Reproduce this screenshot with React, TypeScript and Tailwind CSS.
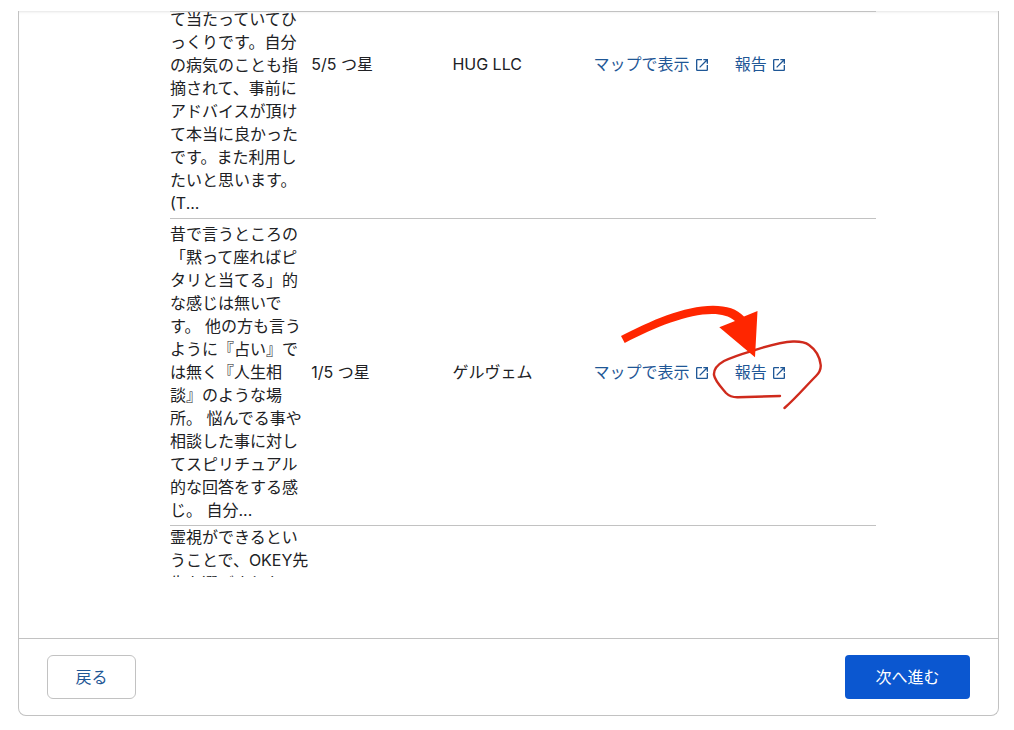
import React from "react";

type Review = {
  lines: string[];
  rating: string;
  author: string;
  scrolled?: boolean;
  marked?: boolean;
};

const reviews: Review[] = [
  {
    lines: [
      "て当たっていてひ",
      "っくりです。自分",
      "の病気のことも指",
      "摘されて、事前に",
      "アドバイスが頂け",
      "て本当に良かった",
      "です。また利用し",
      "たいと思います。",
      "(T...",
    ],
    rating: "5/5 つ星",
    author: "HUG LLC",
    scrolled: true,
  },
  {
    lines: [
      "昔で言うところの",
      "「黙って座ればピ",
      "タリと当てる」的",
      "な感じは無いで",
      "す。 他の方も言う",
      "ように『占い』で",
      "は無く『人生相",
      "談』のような場",
      "所。 悩んでる事や",
      "相談した事に対し",
      "てスピリチュアル",
      "的な回答をする感",
      "じ。 自分...",
    ],
    rating: "1/5 つ星",
    author: "ゲルヴェム",
    marked: true,
  },
];

const lastReview = ["霊視ができるとい", "うことで、OKEY先", "生を選びました"];

function OpenIcon() {
  return (
    <svg viewBox="0 0 24 24" className="size-4 shrink-0" fill="currentColor" aria-hidden="true">
      <path d="M19 19H5V5h7V3H5a2 2 0 0 0-2 2v14a2 2 0 0 0 2 2h14c1.1 0 2-.9 2-2v-7h-2v7zM14 3v2h3.59l-9.83 9.83 1.41 1.41L19 6.41V10h2V3h-7z" />
    </svg>
  );
}

function Marker() {
  return (
    <svg
      viewBox="615 299 215 115"
      className="pointer-events-none absolute -top-[62px] -left-30 h-[115px] w-[215px] max-w-none"
      fill="none"
      aria-hidden="true"
    >
      <path
        d="M780 396L738 397.300C732 397.500 729 396 726 393C721 387 715 381 714 375C713.500 369 717 365 724 361C734 356 745 353 755 350C768 346 780 342 793 341.500C800 341.300 805 342 809 345C816 350 820 358 820.700 365C821 369 820 372 816 376C806 386 796 398 784.500 408"
        stroke="#cf2a1c"
        strokeWidth="2.400"
        strokeLinecap="round"
        strokeLinejoin="round"
      />
      <path
        d="M621 336C650 321 684 305.700 713 305.700C727 305.700 737 309 744 316.500L757.500 311L755 357.300L719.300 327.300L735 321C729 316 722 314 712 314C688 314 655 327 624.700 343Z"
        fill="#ff2600"
      />
    </svg>
  );
}

function TextLines({ lines }: { lines: string[] }) {
  return (
    <>
      {lines.map((line) => (
        <span key={line} className="block whitespace-nowrap">
          {line}
        </span>
      ))}
    </>
  );
}

function ReviewRow({ review }: { review: Review }) {
  const cell = review.scrolled ? "p-0 pt-[49px] align-top" : "p-0 align-middle";
  return (
    <tr className="shadow-[inset_0_-1px_0_#c2c2c2]">
      <td className="px-0 py-1">
        <TextLines lines={review.lines} />
      </td>
      <td className={cell}>{review.rating}</td>
      <td className={cell}>{review.author}</td>
      <td className={cell}>
        <a href="#map" className="flex items-center gap-1 whitespace-nowrap text-[#1f5796]">
          マップで表示
          <OpenIcon />
        </a>
      </td>
      <td className={cell}>
        <div className="relative">
          <a href="#report" className="flex items-center gap-1 whitespace-nowrap text-[#1f5796]">
            報告
            <OpenIcon />
          </a>
          {review.marked && <Marker />}
        </div>
      </td>
    </tr>
  );
}

export default function App() {
  return (
    <div className="bg-white pt-[11px] pr-[15px] pb-[13px] pl-[18px] font-['Inter','Noto_Sans_CJK_JP',sans-serif] text-base leading-[23px] text-[#202124]">
      <main className="rounded-b-lg border-x border-b border-[#c2c2c2] shadow-[inset_0_3px_3px_-2px_#e4e4e4]">
        <div className="pr-[122px] pb-[61px] pl-[151px]">
          <div className="h-[566px] overflow-hidden border-t border-[#c2c2c2]">
            <table className="-mt-2 w-full table-fixed border-collapse">
              <tbody>
                {reviews.map((review) => (
                  <ReviewRow key={review.author} review={review} />
                ))}
                <tr>
                  <td className="p-0">
                    <TextLines lines={lastReview} />
                  </td>
                  <td colSpan={4} />
                </tr>
              </tbody>
            </table>
          </div>
        </div>
        <footer className="flex items-center justify-between border-t border-[#c2c2c2] px-7 py-4">
          <button
            type="button"
            className="h-11 w-[89px] rounded-md border border-[#c2c2c2] bg-white text-[#1f5796]"
          >
            戻る
          </button>
          <button type="button" className="h-11 w-[125px] rounded-sm bg-[#0b57d0] text-white">
            次へ進む
          </button>
        </footer>
      </main>
    </div>
  );
}
